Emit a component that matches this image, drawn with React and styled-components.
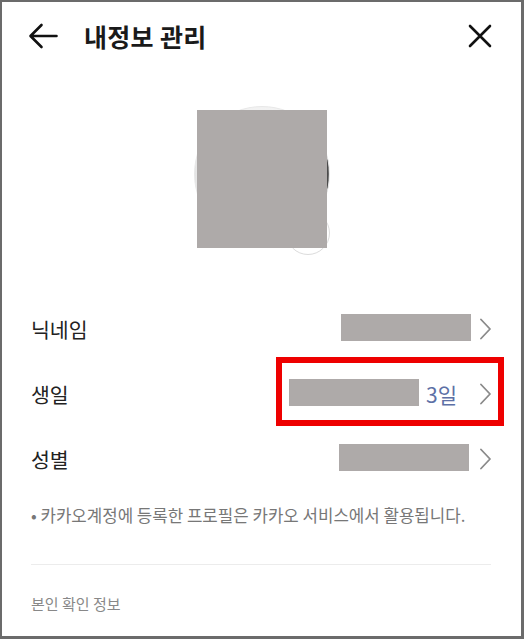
import React from "react";
import styled, { createGlobalStyle } from "styled-components";

const Global = createGlobalStyle`
  html, body { margin: 0; padding: 0; background: #ffffff; }
  body { font-family: "Noto Sans CJK KR", "Noto Sans", sans-serif; }
  * { box-sizing: border-box; }
`;

const Frame = styled.div`
  width: 524px;
  height: 639px;
  background: #fff;
  border: 2px solid #6b6b6b;
  border-right-width: 3px;
  border-bottom-width: 3px;
  overflow: hidden;
  display: flex;
  flex-direction: column;
`;

const Header = styled.header`
  height: 67px;
  display: flex;
  align-items: center;
  padding: 0 29px 0 26px;
`;

const IconButton = styled.button`
  border: 0;
  background: none;
  padding: 0;
  display: flex;
  align-items: center;
  justify-content: center;
  color: #111;
  cursor: pointer;
`;

const Title = styled.h1`
  margin: 0 0 0 26px;
  flex: 1;
  font-size: 25px;
  line-height: 32px;
  font-weight: 700;
  color: #1a1a1a;
  letter-spacing: 0.3px;
`;

const AvatarSection = styled.section`
  height: 227px;
  display: flex;
  justify-content: center;
  padding-top: 37px;
`;

const AvatarWrap = styled.div`
  position: relative;
  width: 136px;
  height: 152px;
`;

const AvatarCircle = styled.div`
  width: 136px;
  height: 136px;
  border-radius: 50%;
  border: 1px solid #e8e8e8;
  background: linear-gradient(90deg, #e2e2e2 0%, #f1f1f1 4%, #f3f3f3 88%, #9a9a9a 95%, #3c3c3c 98.5%, #777 100%);
`;

const CameraBadge = styled.div`
  position: absolute;
  left: 92px;
  top: 105px;
  width: 44px;
  height: 44px;
  border-radius: 50%;
  background: #fff;
  border: 1.5px solid #dcdcdc;
`;

const Redact = styled.div`
  position: absolute;
  left: ${(p) => p.$left}px;
  top: ${(p) => p.$top}px;
  width: ${(p) => p.$w}px;
  height: ${(p) => p.$h}px;
  background: #aeaaa9;
`;

const List = styled.ul`
  list-style: none;
  margin: 0;
  padding: 0 30px 0 29px;
`;

const Row = styled.li`
  height: 65px;
  display: flex;
  align-items: center;
  justify-content: space-between;
`;

const Label = styled.span`
  font-size: 20.5px;
  color: #222;
`;

const Value = styled.div`
  position: relative;
  display: flex;
  align-items: center;
`;

const ValueBar = styled.span`
  display: block;
  width: 130px;
  height: 27px;
  background: #aeaaa9;
  margin-top: -3px;
`;

const DayText = styled.span`
  font-size: 21px;
  line-height: 28px;
  color: #5d70a6;
  margin-left: 7px;
`;

const Chevron = styled.svg`
  margin-left: ${(p) => p.$gap}px;
  flex: none;
`;

const Highlight = styled.div`
  position: absolute;
  left: -13px;
  right: -13px;
  top: -23px;
  bottom: -18px;
  border: 6px solid #ee0000;
  pointer-events: none;
`;

const Note = styled.p`
  margin: 12px 29px 0;
  font-size: 16.8px;
  line-height: 24px;
  color: #777;
`;

const Divider = styled.hr`
  margin: 37px 30px 0 29px;
  border: 0;
  border-top: 1px solid #ececec;
`;

const SectionTitle = styled.div`
  margin: 29px 29px 0;
  font-size: 15px;
  line-height: 20px;
  color: #888;
`;

const ChevronIcon = ({ gap }) => (
  <Chevron $gap={gap} width="11" height="22" viewBox="0 0 11 22">
    <path d="M1 1.5 L10 11 L1 20.5" fill="none" stroke="#8a8a8a" strokeWidth="1.8" strokeLinecap="round" strokeLinejoin="round" />
  </Chevron>
);

export default function App() {
  return (
    <>
      <Global />
      <Frame>
        <Header>
          <IconButton aria-label="뒤로">
            <svg width="30" height="26" viewBox="0 0 30 26">
              <path d="M28.5 13 H3 M13.5 2 L2.5 13 L13.5 24" fill="none" stroke="#111" strokeWidth="2.6" strokeLinecap="round" strokeLinejoin="round" />
            </svg>
          </IconButton>
          <Title>내정보 관리</Title>
          <IconButton aria-label="닫기">
            <svg width="24" height="24" viewBox="0 0 24 24">
              <path d="M2 2 L22 22 M22 2 L2 22" fill="none" stroke="#111" strokeWidth="2.6" strokeLinecap="round" />
            </svg>
          </IconButton>
        </Header>

        <AvatarSection>
          <AvatarWrap>
            <AvatarCircle />
            <CameraBadge />
            <Redact $left={3} $top={4} $w={130} $h={138} />
          </AvatarWrap>
        </AvatarSection>

        <List>
          <Row>
            <Label>닉네임</Label>
            <Value>
              <ValueBar />
              <ChevronIcon gap={9} />
            </Value>
          </Row>
          <Row>
            <Label>생일</Label>
            <Value>
              <ValueBar />
              <DayText>3일</DayText>
              <ChevronIcon gap={23} />
              <Highlight />
            </Value>
          </Row>
          <Row>
            <Label>성별</Label>
            <Value>
              <ValueBar />
              <ChevronIcon gap={11} />
            </Value>
          </Row>
        </List>

        <Note>• 카카오계정에 등록한 프로필은 카카오 서비스에서 활용됩니다.</Note>
        <Divider />
        <SectionTitle>본인 확인 정보</SectionTitle>
      </Frame>
    </>
  );
}
